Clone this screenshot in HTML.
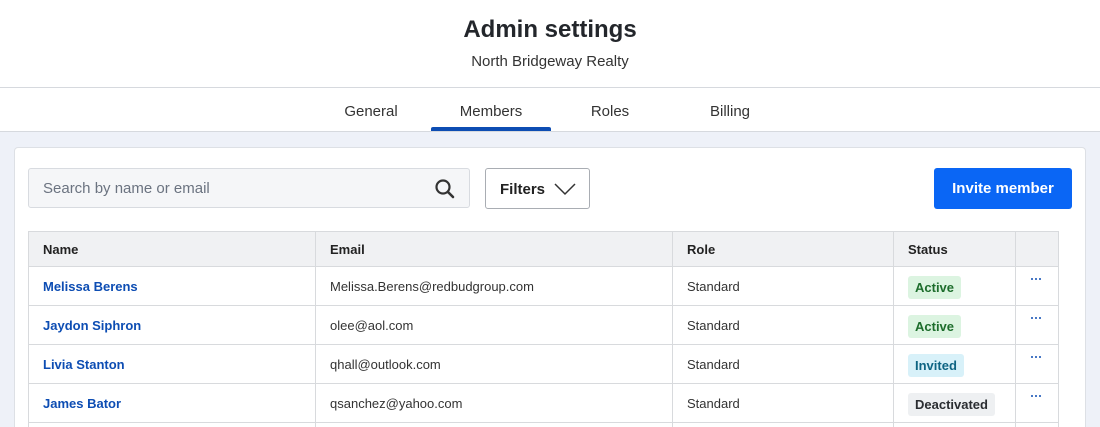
<!DOCTYPE html>
<html><head><style>
*{box-sizing:border-box;margin:0;padding:0}
html,body{width:1100px;height:427px;overflow:hidden}
body{font-family:"Liberation Sans",sans-serif;background:#eef1f8;position:relative;color:#222}
.hdr{position:absolute;left:0;top:0;width:1100px;height:88px;background:#fff;border-bottom:1px solid #d6d9de;text-align:center}
.hdr h1{position:absolute;top:16px;width:100%;font-size:24px;font-weight:bold;color:#23262b}
.hdr p{position:absolute;top:53px;width:100%;font-size:15px;color:#333}
.tabs{position:absolute;left:0;top:88px;width:1100px;height:44px;background:#fff;border-bottom:1px solid #d6d9de}
.tab{position:absolute;top:15px;width:120px;text-align:center;font-size:15px;color:#333}
.ul{position:absolute;left:431px;top:127px;width:120px;height:4px;background:#0d4db3;border-radius:2px 2px 0 0}
.card{position:absolute;left:14px;top:147px;width:1072px;height:280px;background:#fff;border:1px solid #dde0e5;border-bottom:none;border-radius:4px 4px 0 0}
.search{position:absolute;left:28px;top:168px;width:442px;height:40px;background:#f5f6f8;border:1px solid #d8dbe0;border-radius:3px;font-size:15px;color:#6b7380;padding:11px 14px}
.filt{position:absolute;left:485px;top:168px;width:105px;height:41px;border:1px solid #a9adb3;border-radius:3px;font-size:15px;font-weight:bold;padding:12px 14px;color:#222}
.inv{position:absolute;left:934px;top:168px;width:138px;height:41px;background:#0a66f5;border-radius:3px;color:#fff;font-size:15px;font-weight:bold;text-align:center;line-height:41px}
table{position:absolute;left:28px;top:231px;border-collapse:collapse;font-size:13px}
td,th{border:1px solid #d8dadd;height:39px;padding:0 14px;text-align:left;vertical-align:middle}
th{background:#f0f1f3;height:35px;font-weight:bold;color:#222}
td.n{color:#0d4db3;font-weight:bold}
td{color:#333}
.b{display:inline-block;font-weight:bold;padding:4px 7px;border-radius:3px;font-size:13px;margin-top:3px}
.a{background:#dcf4e1;color:#1d6d2c}.i{background:#d8f1f9;color:#0e6483}.d{background:#eef0f2;color:#2a2d31}
.dots{position:relative}
.dots i{position:absolute;left:15px;top:11px;width:2px;height:2px;background:#0d4db3;border-radius:1px;box-shadow:4px 0 #0d4db3,8px 0 #0d4db3}
</style></head><body>
<div class="hdr"><h1>Admin settings</h1><p>North Bridgeway Realty</p></div>
<div class="tabs">
<div class="tab" style="left:311px">General</div>
<div class="tab" style="left:431px">Members</div>
<div class="tab" style="left:550px">Roles</div>
<div class="tab" style="left:670px">Billing</div>
</div>
<div class="ul"></div>
<div class="card"></div>
<div class="search">Search by name or email
<svg style="position:absolute;right:14px;top:10px" width="20" height="20" viewBox="0 0 20 20"><circle cx="8" cy="8" r="6.5" fill="none" stroke="#333" stroke-width="2.2"/><path d="M13 13l5 5" stroke="#333" stroke-width="2.6" stroke-linecap="round"/></svg></div>
<div class="filt">Filters<svg style="position:absolute;left:68px;top:13px" width="22" height="14" viewBox="0 0 22 14"><path d="M1 2l10 10 10-10" fill="none" stroke="#333" stroke-width="1.5"/></svg></div>
<div class="inv">Invite member</div>
<table>
<tr><th style="width:287px">Name</th><th style="width:357px">Email</th><th style="width:221px">Role</th><th style="width:122px">Status</th><th style="width:43px"></th></tr>
<tr><td class="n">Melissa Berens</td><td>Melissa.Berens@redbudgroup.com</td><td>Standard</td><td><span class="b a">Active</span></td><td class="dots"><i></i></td></tr>
<tr><td class="n">Jaydon Siphron</td><td>olee@aol.com</td><td>Standard</td><td><span class="b a">Active</span></td><td class="dots"><i></i></td></tr>
<tr><td class="n">Livia Stanton</td><td>qhall@outlook.com</td><td>Standard</td><td><span class="b i">Invited</span></td><td class="dots"><i></i></td></tr>
<tr><td class="n">James Bator</td><td>qsanchez@yahoo.com</td><td>Standard</td><td><span class="b d">Deactivated</span></td><td class="dots"><i></i></td></tr>
</table>
<div style="position:absolute;left:28px;top:423px;width:1031px;height:10px;border-left:1px solid #d8dadd;border-right:1px solid #d8dadd"></div>
<div style="position:absolute;left:315px;top:423px;width:358px;height:10px;border-left:1px solid #d8dadd;border-right:1px solid #d8dadd"></div>
<div style="position:absolute;left:893px;top:423px;width:123px;height:10px;border-left:1px solid #d8dadd;border-right:1px solid #d8dadd"></div>
</body></html>
